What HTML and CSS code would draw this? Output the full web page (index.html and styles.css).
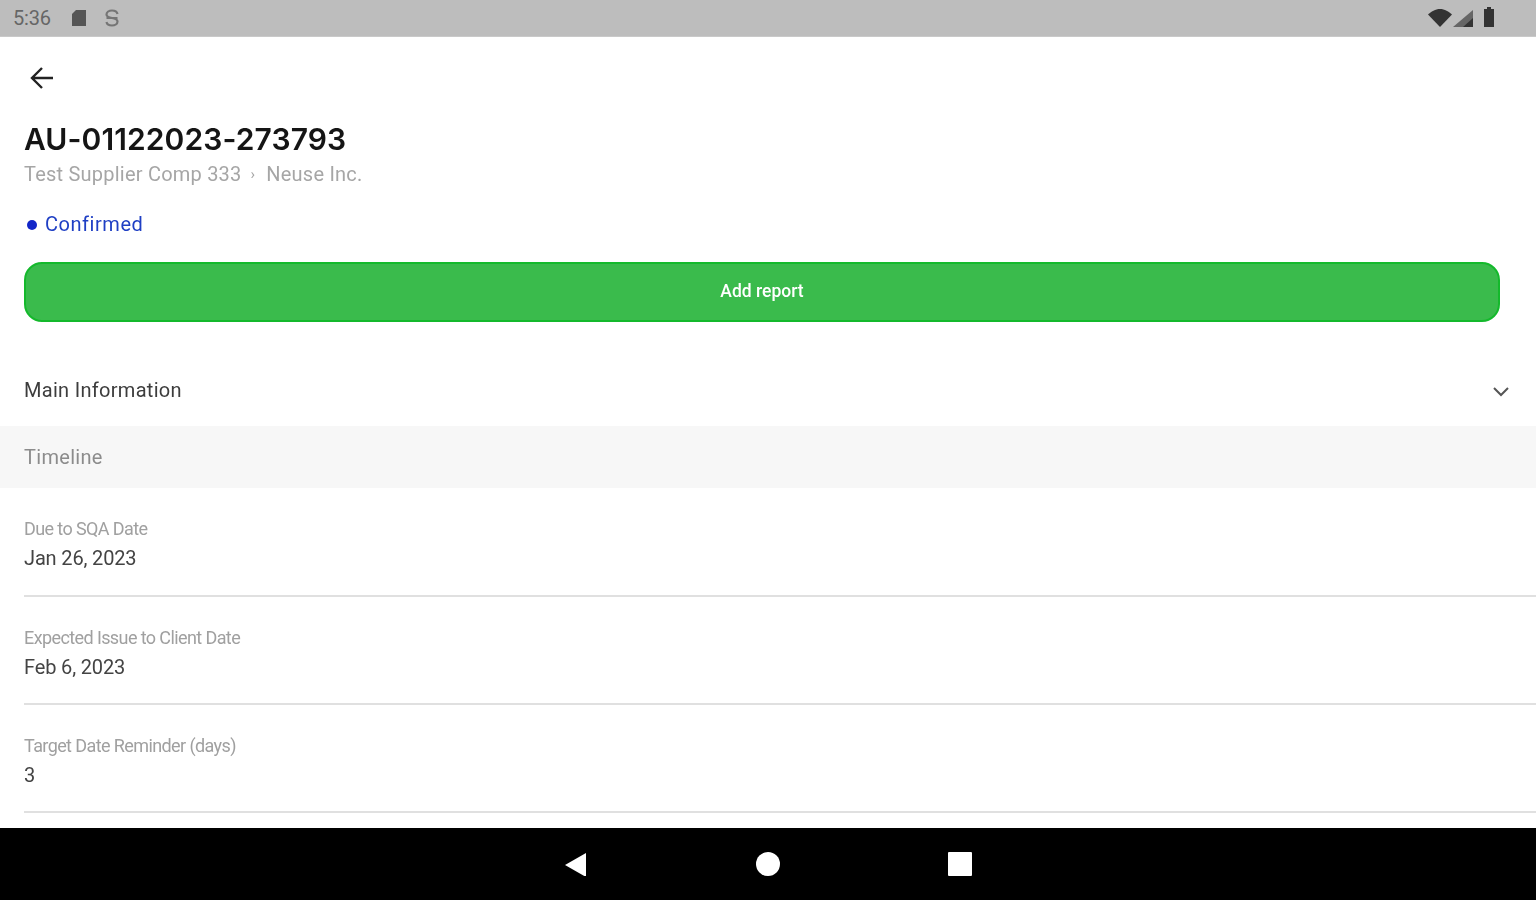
FILE: index.html
```html
<!DOCTYPE html>
<html lang="en">
<head>
<meta charset="utf-8">
<title>AU-01122023-273793</title>
<link rel="stylesheet" href="styles.css">
</head>
<body>
<div class="screen">
  <header class="status">
    <div class="status-left">
      <span class="time">5:36</span>
      <svg class="st-sd" viewBox="0 0 16 18" width="16" height="18"><path d="M5 1h10v16H1V5z" fill="#555"/></svg>
      <svg class="st-s" viewBox="0 0 16 18" width="16" height="18"><path d="M13.500 5C13 2.500 11 1.500 8 1.500S2.500 3 2.500 5.500C2.500 10.500 13.500 7.500 13.500 12.500 13.500 15 11 16.500 8 16.500S3 15.500 2.500 13M2.500 9h11" fill="none" stroke="#757575" stroke-width="2.200"/></svg>
    </div>
    <div class="status-right">
      <svg viewBox="0 0 24 18" width="24" height="18"><path d="M0 5.500C3 2.500 7.500 0 12 0s9 2.500 12 5.500L12 18z" fill="#333"/></svg>
      <svg class="st-signal" viewBox="0 0 20 17" width="20" height="17"><path d="M20 0v17H0z" fill="#666"/><path d="M20 8v9H10z" fill="#333"/></svg>
      <svg class="st-bat" viewBox="0 0 12 20" width="12" height="20"><path d="M4 0h4v2h3v18H1V2h3z" fill="#333"/></svg>
    </div>
  </header>

  <main class="content">
    <div class="top">
      <button class="back" aria-label="Back">
        <svg viewBox="0 0 24 24" width="24" height="24"><path d="M23 12H2M12 2 2 12l10 10" fill="none" stroke="#222" stroke-width="2.400"/></svg>
      </button>
      <h1 class="title">AU-01122023-273793</h1>
      <p class="crumbs"><span>Test Supplier Comp 333</span><span class="sep">›</span><span>Neuse Inc.</span></p>
      <p class="state"><span class="dot"></span>Confirmed</p>
      <button class="add">Add report</button>
    </div>

    <div class="row-main">
      <span>Main Information</span>
      <svg viewBox="0 0 18 12" width="18" height="12"><path d="M2 2l7 7 7-7" fill="none" stroke="#555" stroke-width="2"/></svg>
    </div>
    <div class="row-tab">Timeline</div>

    <dl class="fields">
      <div class="field">
        <dt>Due to SQA Date</dt>
        <dd>Jan 26, 2023</dd>
      </div>
      <div class="field">
        <dt>Expected Issue to Client Date</dt>
        <dd>Feb 6, 2023</dd>
      </div>
      <div class="field">
        <dt>Target Date Reminder (days)</dt>
        <dd>3</dd>
      </div>
    </dl>
  </main>

  <nav class="navbar">
    <svg viewBox="0 0 24 24" width="24" height="24"><path d="M22 1v24L1 13z" fill="#fff"/></svg>
    <svg viewBox="0 0 24 24" width="24" height="24"><circle cx="12" cy="12" r="12" fill="#fff"/></svg>
    <svg viewBox="0 0 24 24" width="24" height="24"><rect width="24" height="24" rx="1" fill="#fff"/></svg>
  </nav>
</div>
</body>
</html>
```

FILE: styles.css
```css
* { box-sizing: border-box; }
html, body { margin: 0; padding: 0; }
body { background: #fff; font-family: Roboto, "Liberation Sans", sans-serif; }

.screen {
  width: 1536px;
  height: 900px;
  display: flex;
  flex-direction: column;
  overflow: hidden;
  filter: blur(0.6px);
}

.status {
  height: 37px;
  flex: none;
  background: #bdbdbd;
  border-bottom: 1px solid #c9c9c9;
  display: flex;
  align-items: center;
  justify-content: space-between;
  padding: 0 41px 0 13px;
}
.status-left { display: flex; align-items: center; }
.time { font-size: 20px; color: #666; width: 58px; letter-spacing: -0.2px; }
.st-s { margin-left: 17px; }
.status-right { display: flex; align-items: center; }
.st-signal { margin-left: 1px; margin-top: 1px; }
.st-bat { margin-left: 10px; margin-top: -3px; }

.content { flex: 1; min-height: 0; overflow: hidden; }

.top { padding: 0 36px 0 24px; display: flex; flex-direction: column; align-items: flex-start; }
.back {
  border: 0;
  background: none;
  padding: 0;
  margin: 29px 0 0 6px;
  height: 24px;
  display: block;
}
.title {
  margin: 31px 0 0;
  font-family: Inter, Roboto, sans-serif;
  font-size: 30px;
  line-height: 36px;
  font-weight: 600;
  letter-spacing: 0.1px;
  color: #151515;
}
.crumbs {
  margin: 3px 0 0;
  font-size: 20px;
  line-height: 28px;
  letter-spacing: 0.22px;
  color: #a6a6a6;
  display: flex;
  align-items: center;
}
.sep { margin: 0 11px 0 9px; font-size: 15px; }
.state {
  margin: 22px 0 0;
  font-size: 20px;
  line-height: 28px;
  letter-spacing: 0.55px;
  color: #1f3fc4;
  display: flex;
  align-items: center;
}
.dot {
  width: 10px;
  height: 10px;
  border-radius: 50%;
  background: #1226c8;
  margin: 2px 8px 0 3px;
}
.add {
  margin-top: 24px;
  width: 100%;
  height: 60px;
  background: #3abb4c;
  border: 2px solid #14b92c;
  border-radius: 18px;
  color: #fff;
  font-family: Roboto, sans-serif;
  font-size: 17.500px;
  font-weight: 500;
  padding: 0 0 2px;
}

.row-main {
  height: 64px;
  margin-top: 36px;
  padding: 0 26px 0 24px;
  display: flex;
  align-items: center;
  justify-content: space-between;
  font-size: 20px;
  letter-spacing: 0.3px;
  color: #3d3d3d;
}
.row-main svg { margin-top: 3px; }
.row-tab {
  height: 62px;
  margin-top: 4px;
  background: #f7f7f7;
  padding-left: 24px;
  display: flex;
  align-items: center;
  font-size: 20px;
  letter-spacing: 0.3px;
  color: #8c8c8c;
}

.fields { margin: 0 0 0 24px; }
.field {
  height: 108px;
  padding-top: 29px;
  border-bottom: 2px solid #e0e0e0;
}
.field:first-child { height: 109px; }
.field dt {
  font-size: 18px;
  line-height: 24px;
  letter-spacing: -0.6px;
  color: #a0a0a0;
}
.field dd {
  margin: 3px 0 0;
  font-size: 20px;
  line-height: 28px;
  letter-spacing: -0.15px;
  color: #444;
}

.navbar {
  height: 72px;
  flex: none;
  background: #000;
  display: flex;
  align-items: center;
  justify-content: center;
  gap: 168px;
}
```
